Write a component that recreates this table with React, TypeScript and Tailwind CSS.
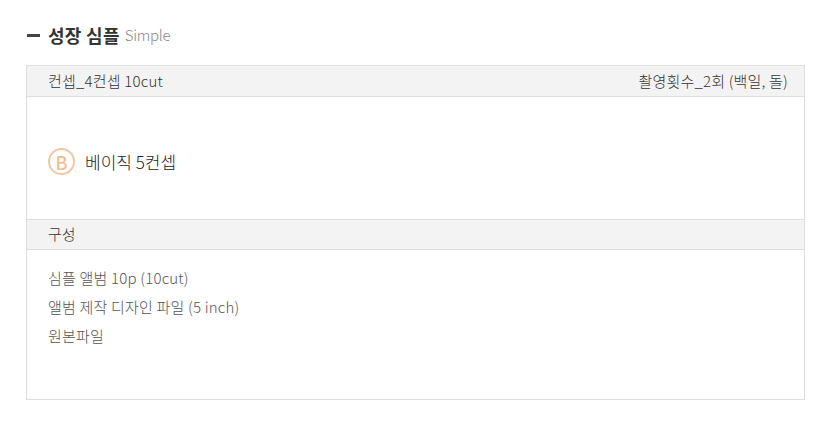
import React from 'react';

const font = { fontFamily: '"Noto Sans CJK KR", "Noto Sans", sans-serif' };

function App() {
  return (
    <div className="w-[835px] h-[431px] bg-white" style={font}>
      <div className="pl-[26px] pr-[30px] pt-[22px]">
        <h2 className="flex items-center h-[26px]">
          <span className="block w-[13px] h-[3px] bg-[#444] ml-[1px] mr-[8px]" />
          <span className="text-[18px] font-bold text-[#333] tracking-[0.3px]">성장 심플</span>
          <span className="ml-[5px] text-[15px] font-light text-[#888] tracking-[-0.3px]">Simple</span>
        </h2>
        <div className="mt-[17px] border border-[#dedede]">
          <div className="flex justify-between items-center h-[31px] bg-[#f3f3f3] border-b border-[#dedede] pl-[21px] pr-[16px] text-[15px] font-light text-[#333] tracking-[0.2px]">
            <span>컨셉_4컨셉 10cut</span>
            <span>촬영횟수_2회 (백일, 돌)</span>
          </div>
          <div className="flex items-center h-[122px] pl-[21px] pt-[7px]">
            <span className="flex items-center justify-center w-[27px] h-[27px] rounded-full border-2 border-[#f4c7a0] text-[#f2bd8e] text-[18px] font-medium leading-none">B</span>
            <span className="ml-[10px] text-[17px] font-light text-[#222]">베이직 5컨셉</span>
          </div>
          <div className="flex items-center h-[31px] bg-[#f3f3f3] border-y border-[#dedede] pl-[21px] text-[15px] font-light text-[#333]">
            구성
          </div>
          <ul className="pt-[13px] pb-[49px] pl-[21px] text-[15px] font-light leading-[29px] text-[#555] tracking-[0.2px]">
            <li>심플 앨범 10p (10cut)</li>
            <li>앨범 제작 디자인 파일 (5 inch)</li>
            <li>원본파일</li>
          </ul>
        </div>
      </div>
    </div>
  );
}

export default App;
